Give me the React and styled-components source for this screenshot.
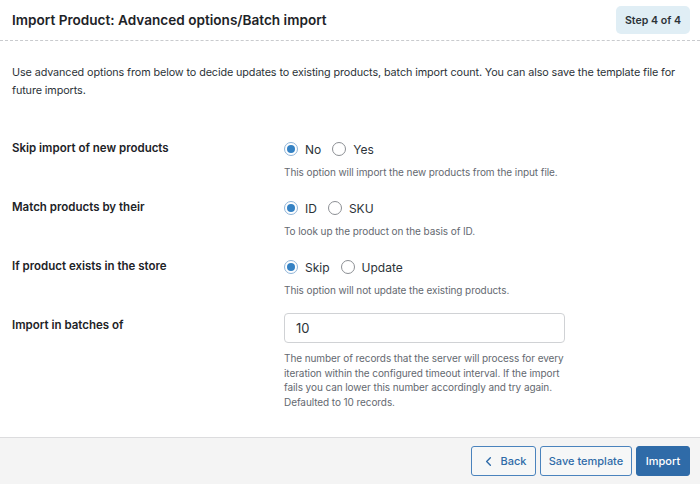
import React from 'react'
import styled, { createGlobalStyle } from 'styled-components'
import { ChevronLeft } from 'lucide-react'

const GlobalStyle = createGlobalStyle`
  * { box-sizing: border-box; }
  body {
    margin: 0;
    background: #fff;
    font-family: Inter, "Noto Sans", "Liberation Sans", sans-serif;
    color: #1d2327;
  }
`

const Page = styled.div`
  width: 700px;
  height: 484px;
  display: flex;
  flex-direction: column;
  background: #fff;
`

const Header = styled.div`
  height: 41px;
  display: flex;
  align-items: center;
  justify-content: space-between;
  padding: 0 10px 0 12px;
  border-bottom: 1px dashed #c9cbce;
`

const Title = styled.h2`
  margin: 0;
  font-size: 13.6px;
  font-weight: 600;
  color: #1d2327;
`

const StepBadge = styled.div`
  height: 28px;
  width: 74px;
  display: flex;
  align-items: center;
  justify-content: center;
  background: #e0eef5;
  border-radius: 5px;
  font-size: 10.6px;
  font-weight: 600;
  color: #2c3338;
`

const Main = styled.div`
  flex: 1;
  padding: 23px 12px 0 12px;
`

const Intro = styled.p`
  margin: 0 0 38px 0;
  font-size: 10.8px;
  line-height: 18px;
  color: #2c3338;
  letter-spacing: -0.1px;
`

const Row = styled.div`
  display: grid;
  grid-template-columns: 272px 1fr;
  margin-bottom: ${p => p.$space ?? 17}px;
`

const Label = styled.div`
  font-size: 11.5px;
  font-weight: 600;
  line-height: 20px;
  padding-top: ${p => p.$offset || 0}px;
  color: #1d2327;
`

const Control = styled.div`
  display: flex;
  flex-direction: column;
`

const Options = styled.div`
  height: 22px;
  display: flex;
  align-items: center;
  gap: 11px;
`

const Option = styled.label`
  display: flex;
  align-items: center;
  gap: 7px;
  font-size: 12px;
  color: #2c3338;
`

const Radio = styled.span`
  width: 14px;
  height: 14px;
  border-radius: 50%;
  border: 1px solid ${p => (p.$checked ? '#8fb4d8' : '#8c8f94')};
  background: #fff;
  display: flex;
  align-items: center;
  justify-content: center;

  &::after {
    content: '';
    width: 8px;
    height: 8px;
    border-radius: 50%;
    background: #3582c4;
    display: ${p => (p.$checked ? 'block' : 'none')};
  }
`

const Help = styled.p`
  margin: ${p => p.$gap || 4}px 0 0 0;
  font-size: 10px;
  letter-spacing: -0.08px;
  line-height: ${p => p.$lh || 16}px;
  color: #646970;
  max-width: ${p => (p.$narrow ? '282px' : 'none')};
`

const NumberInput = styled.input`
  width: 281px;
  height: 30px;
  border: 1px solid #d0d2d5;
  border-radius: 4px;
  padding: 0 11px;
  font-family: inherit;
  font-size: 13px;
  color: #2c3338;
  outline: none;
`

const Footer = styled.div`
  height: 47px;
  border-top: 1px solid #dcdcde;
  background: #f4f4f4;
  display: flex;
  justify-content: flex-end;
  align-items: flex-start;
  gap: 4px;
  padding: 8px 10px 0 0;
`

const Button = styled.button`
  height: 30px;
  width: ${p => p.$w}px;
  display: flex;
  align-items: center;
  justify-content: center;
  gap: 5px;
  border-radius: 3px;
  font-family: inherit;
  font-size: 11px;
  font-weight: 500;
  cursor: pointer;
  border: 1px solid ${p => (p.$primary ? '#2f6ba8' : '#4a83bd')};
  background: ${p => (p.$primary ? '#2f6ba8' : '#f6f7f7')};
  color: ${p => (p.$primary ? '#fff' : '#2f6ba8')};
`

const settings = [
  {
    label: 'Skip import of new products',
    options: ['No', 'Yes'],
    help: 'This option will import the new products from the input file.',
  },
  {
    label: 'Match products by their',
    options: ['ID', 'SKU'],
    help: 'To look up the product on the basis of ID.',
  },
  {
    label: 'If product exists in the store',
    options: ['Skip', 'Update'],
    help: 'This option will not update the existing products.',
  },
]

const App = () => {
  return (
    <>
      <GlobalStyle />
      <Page>
        <Header>
          <Title>Import Product: Advanced options/Batch import</Title>
          <StepBadge>Step 4 of 4</StepBadge>
        </Header>
        <Main>
          <Intro>
            Use advanced options from below to decide updates to existing products, batch import count. You can also save the template file for future imports.
          </Intro>
          {settings.map((s, idx) => (
            <Row key={s.label} $space={idx === 2 ? 15 : 17}>
              <Label>{s.label}</Label>
              <Control>
                <Options>
                  {s.options.map((o, i) => (
                    <Option key={o}>
                      <Radio $checked={i === 0} />
                      {o}
                    </Option>
                  ))}
                </Options>
                <Help>{s.help}</Help>
              </Control>
            </Row>
          ))}
          <Row>
            <Label $offset={2}>Import in batches of</Label>
            <Control>
              <NumberInput type="text" defaultValue="10" />
              <Help $narrow $gap={8} $lh={14.7}>
                The number of records that the server will process for every iteration within the configured timeout interval. If the import fails you can lower this number accordingly and try again. Defaulted to 10 records.
              </Help>
            </Control>
          </Row>
        </Main>
        <Footer>
          <Button $w={65}>
            <ChevronLeft size={15} strokeWidth={2.2} />
            Back
          </Button>
          <Button $w={92}>Save template</Button>
          <Button $primary $w={54}>Import</Button>
        </Footer>
      </Page>
    </>
  )
}

export default App
